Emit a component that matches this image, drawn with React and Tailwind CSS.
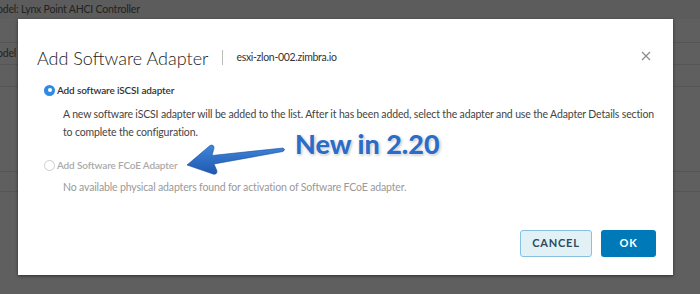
import React from 'react';

const font = { fontFamily: 'Lato, "Open Sans", sans-serif' };

function BackgroundPage() {
  // faint table rows of the page behind the modal
  return (
    <div className="w-full h-full bg-[#5f5f5f] text-[10.5px] tracking-[-0.2px] text-[#222]">
      <div className="h-[19px] bg-[#5c5c5c] flex items-center">
        <span className="-ml-[3px] leading-none">odel: Lynx Point AHCI Controller</span>
      </div>
      <div className="h-[24px] border-b border-[#555]" />
      <div className="h-[22px] border-b border-[#555] flex items-center">
        <span className="-ml-[3px] leading-none">odel</span>
      </div>
      <div className="h-[22px] border-b border-[#555]" />
      <div className="h-[85px] border-b border-[#555]" />
      <div className="h-[20px] border-b border-[#555]" />
    </div>
  );
}

function Arrow() {
  return (
    <svg width="110" height="40" viewBox="180 140 110 40" className="shrink-0">
      <defs>
        <linearGradient id="ag" x1="0" y1="0" x2="0" y2="1">
          <stop offset="0" stopColor="#3f86dc" />
          <stop offset="1" stopColor="#1f58b0" />
        </linearGradient>
      </defs>
      <path
        d="M187 165 L210 145.5 Q214 144 214 148 L212 155.5 L283 148 Q286 149.5 283 151.5 L214 164 L217 171 Q217 175 213 174 Z"
        fill="url(#ag)"
        stroke="#1b4f9e"
        strokeWidth="0.6"
      />
    </svg>
  );
}

export default function App() {
  return (
    <div className="relative w-[700px] h-[294px] overflow-hidden" style={font}>
      <BackgroundPage />

      {/* modal dialog */}
      <div className="absolute left-[18px] top-[19px] w-[655px] h-[256px] bg-white shadow-[0_1px_3px_rgba(0,0,0,0.5)] flex flex-col">
        <div className="flex items-center pl-[19px] pr-[22px] pt-[21px] h-[56px]">
          <h1 className="text-[18px] font-light text-[#222] leading-none">Add Software Adapter</h1>
          <div className="w-px h-[15px] bg-[#bbb] ml-[14px] mr-[13px]" />
          <span className="text-[10.5px] tracking-[-0.3px] text-[#333]">esxi-zlon-002.zimbra.io</span>
          <button className="ml-auto mt-[-4px]" aria-label="Close">
            <svg width="10" height="10" viewBox="0 0 10 10">
              <path d="M1 1 L9 9 M9 1 L1 9" stroke="#8a8a8a" strokeWidth="1.2" />
            </svg>
          </button>
        </div>

        <div className="pl-[26px] pt-[8px] text-[10.5px] tracking-[-0.15px]">
          <label className="flex items-center h-[14px]">
            <span className="w-[11px] h-[11px] rounded-full bg-[#2f8ae0] flex items-center justify-center mr-[2px]">
              <span className="w-[4px] h-[4px] rounded-full bg-white" />
            </span>
            <span className="text-[10px] font-semibold tracking-[-0.15px] text-[#333]">Add software iSCSI adapter</span>
          </label>
          <p className="ml-[19px] mt-[8px] text-[#444] leading-[18px] w-[600px]">
            A new software iSCSI adapter will be added to the list. After it has been added, select the adapter and use the Adapter Details section
            to complete the configuration.
          </p>

          <div className="flex items-end h-[36px] -mt-[2px]">
            <label className="flex items-center h-[14px] mb-[3px]">
              <span className="w-[11px] h-[11px] rounded-full border border-[#ccc] mr-[2px]" />
              <span className="text-[10px] font-semibold tracking-[-0.15px] text-[#aaa]">Add Software FCoE Adapter</span>
            </label>
          </div>
          <p className="ml-[19px] mt-[5px] text-[#999]">
            No available physical adapters found for activation of Software FCoE adapter.
          </p>
        </div>

        <div className="mt-auto flex justify-end gap-[9px] pr-[17px] pb-[18px]">
          <button className="w-[72px] h-[27px] rounded-[3px] border border-[#86c1e3] bg-[#e1f1f6] text-[#2c4a60] text-[11px] font-bold tracking-[0.8px]">
            CANCEL
          </button>
          <button className="w-[55px] h-[27px] rounded-[3px] bg-[#0079b8] text-white text-[11px] font-bold tracking-[0.8px]">
            OK
          </button>
        </div>
      </div>

      {/* annotation over the dialog */}
      <div className="absolute left-[180px] top-[130px]">
        <div className="absolute left-0 top-[10px]">
          <Arrow />
        </div>
        <div className="absolute left-[115px] top-[-6px] text-[27px] font-black text-[#2c6cc6] whitespace-nowrap [text-shadow:0_0_2px_#fff,0_0_2px_#fff,1px_1px_3px_rgba(0,0,0,0.35)]">
          New in 2.20
        </div>
      </div>
    </div>
  );
}
